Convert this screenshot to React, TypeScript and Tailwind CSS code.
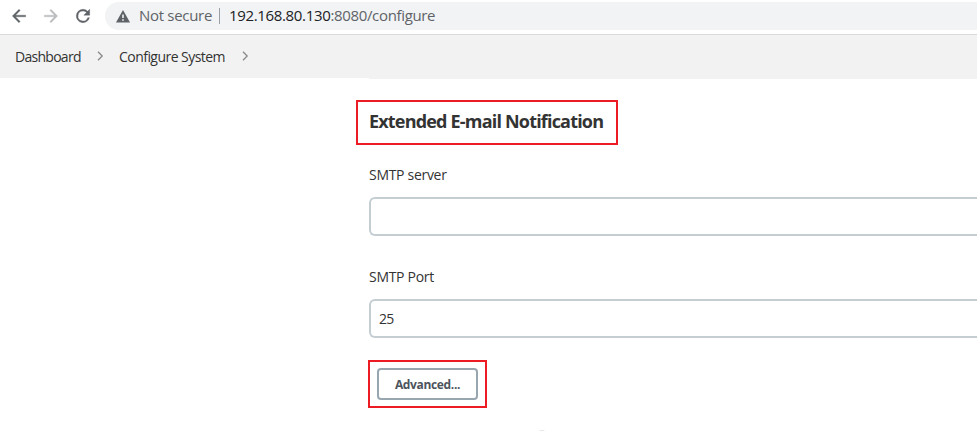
const ARROW = "M20 11H7.83l5.59-5.59L12 4l-8 8 8 8 1.41-1.41L7.83 13H20v-2z";

function Chevron() {
  return (
    <svg className="-mt-[2px]" width="7" height="10" viewBox="0 0 7 10" fill="none" stroke="#8a8a8a" strokeWidth="1.3">
      <path d="M1 0.8 5.2 5 1 9.2" />
    </svg>
  );
}

function BrowserBar() {
  return (
    <div className="flex h-[35px] items-start border-b border-[#d9dadb] bg-white">
      <svg className="ml-[9px] mt-[6px] shrink-0" width="20" height="20" viewBox="0 0 24 24" fill="#5f6368" stroke="#5f6368" strokeWidth="0.4">
        <path d={ARROW} />
      </svg>
      <svg className="ml-[12px] mt-[6px] shrink-0 -scale-x-100" width="20" height="20" viewBox="0 0 24 24" fill="#babcbe" stroke="#babcbe" strokeWidth="0.4">
        <path d={ARROW} />
      </svg>
      <svg className="ml-[12px] mt-[6px] shrink-0" width="20" height="20" viewBox="0 0 24 24" fill="#5f6368">
        <path d="M17.65 6.35A7.96 7.96 0 0 0 12 4a8 8 0 1 0 7.73 10h-2.08A6 6 0 1 1 12 6c1.66 0 3.14.69 4.22 1.78L13 11h7V4z" stroke="#5f6368" strokeWidth="0.5" />
      </svg>
      <div className="ml-[12px] mt-[2px] flex h-[28px] flex-1 items-center rounded-l-full bg-[#f1f3f4] text-[15px] leading-[28px]">
        <svg className="ml-[11px] shrink-0" width="14" height="13" viewBox="0 0 14 13">
          <path d="M7 0 14 12.5H0z" fill="#5f6368" />
          <path d="M6.2 4.6h1.6v3.4H6.2zM6.2 9.2h1.6v1.5H6.2z" fill="#f1f3f4" />
        </svg>
        <span className="-mt-[2px] ml-[9px] w-[80px] shrink-0 whitespace-nowrap tracking-[-0.3px] text-[#5f6368]">Not secure</span>
        <span className="h-[16px] w-px shrink-0 bg-[#9aa0a6]" />
        <span className="-mt-[2px] ml-[9px] whitespace-nowrap tracking-[-0.34px] text-[#202124]">
          192.168.80.130<span className="text-[#5f6368]">:8080/configure</span>
        </span>
      </div>
    </div>
  );
}

function Breadcrumbs() {
  return (
    <nav className="flex h-[43px] items-center bg-[#f2f2f2] pl-[15px] text-[14px] font-medium text-[#333333]">
      <span className="w-[82px] whitespace-nowrap tracking-[-0.72px]">Dashboard</span>
      <Chevron />
      <span className="ml-[15px] w-[123px] whitespace-nowrap tracking-[-0.54px]">Configure System</span>
      <Chevron />
    </nav>
  );
}

function Field({ label, value }: { label: string; value: string }) {
  return (
    <div>
      <label className="block h-[20px] whitespace-nowrap text-[14px] leading-[20px] tracking-[-0.3px] text-[#333333]">{label}</label>
      <div className="mt-[12px] flex h-[39px] items-center rounded-l-[6px] border-2 border-r-0 border-[#c3cdd2] bg-white pl-[8px] text-[14px] tracking-[-0.7px] text-[#333333]">
        {value}
      </div>
    </div>
  );
}

export default function App() {
  return (
    <div className="h-[431px] overflow-hidden bg-white font-['Open_Sans',sans-serif]">
      <BrowserBar />
      <Breadcrumbs />
      <main className="pl-[356px]">
        <div className="ml-[13px] h-px bg-[#f2f2f2]" />
        <div className="mt-[21px] flex h-[45px] w-[262px] items-center border-2 border-[#ed1c24] pb-[3px] pl-[11px]">
          <h1 className="whitespace-nowrap text-[18px] font-bold leading-[24px] tracking-[-0.81px] text-[#333333]">Extended E-mail Notification</h1>
        </div>
        <div className="ml-[13px] mt-[20px] flex flex-col gap-[31px]">
          <Field label="SMTP server" value="" />
          <Field label="SMTP Port" value="25" />
        </div>
        <div className="ml-[12px] mt-[22px] flex h-[48px] w-[119px] items-start border-2 border-[#ed1c24] pl-[7px] pt-[6px]">
          <button className="h-[32px] w-[101px] whitespace-nowrap rounded-[4px] border-2 border-[#98a6af] bg-white pt-[2px] text-[12px] font-bold tracking-[-0.35px] text-[#4d545d]">
            Advanced...
          </button>
        </div>
        <div className="ml-[182px] mt-[22px] h-[10px] w-[8px] rounded-full bg-[#e4e4e4]" />
      </main>
    </div>
  );
}
